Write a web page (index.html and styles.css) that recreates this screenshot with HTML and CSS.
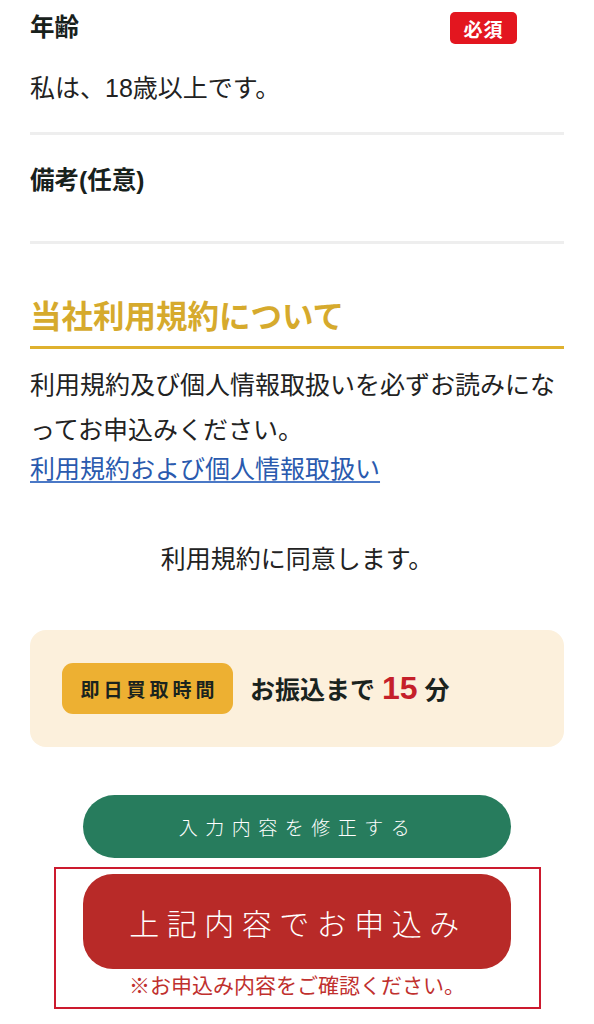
FILE: index.html
```html
<!DOCTYPE html>
<html lang="ja">
<head>
<meta charset="utf-8">
<title>お申込み内容確認</title>
<link rel="stylesheet" href="styles.css">
</head>
<body>
<main class="page">
  <section class="field">
    <div class="field-head">
      <span class="field-label">年齢</span>
      <span class="req-badge">必須</span>
    </div>
    <p class="field-value">私は、18歳以上です。</p>
  </section>
  <section class="field field-empty">
    <div class="field-head field-head-2">
      <span class="field-label">備考(任意)</span>
    </div>
  </section>

  <h2 class="terms-title">当社利用規約について</h2>
  <p class="terms-text">利用規約及び個人情報取扱いを必ずお読みになってお申込みください。</p>
  <p class="terms-link-wrap"><a class="terms-link" href="#">利用規約および個人情報取扱い</a></p>
  <p class="agree">利用規約に同意します。</p>

  <div class="sameday">
    <span class="sameday-badge">即日買取時間</span>
    <span class="sameday-text">お振込まで <em class="sameday-num">15</em> 分</span>
  </div>

  <div class="actions">
    <button class="btn btn-edit" type="button">入力内容を修正する</button>
    <div class="submit-frame">
      <button class="btn btn-submit" type="button">上記内容でお申込み</button>
      <p class="submit-note">※お申込み内容をご確認ください。</p>
    </div>
  </div>
</main>
</body>
</html>
```

FILE: styles.css
```css
* {
  box-sizing: border-box;
}

html, body {
  margin: 0;
  padding: 0;
  background: #ffffff;
}

body {
  font-family: "Liberation Sans", "Noto Sans CJK JP", sans-serif;
  color: #1f2622;
}

.page {
  width: 594px;
  padding: 0 30px;
}

p {
  margin: 0;
}

.field {
  border-bottom: 3px solid #eeeeee;
}

.field-head {
  display: flex;
  align-items: center;
  justify-content: space-between;
  padding: 12px 47px 0 0;
  height: 44px;
}

.field-label {
  font-size: 24.5px;
  font-weight: 700;
  line-height: 32px;
  color: #18211c;
}

.req-badge {
  display: inline-flex;
  align-items: center;
  justify-content: center;
  width: 67px;
  height: 32px;
  background: #e3161f;
  color: #ffffff;
  border-radius: 5px;
  font-size: 19px;
  font-weight: 700;
  letter-spacing: 1px;
}

.field-value {
  font-size: 25px;
  line-height: 38px;
  margin-top: 25px;
  padding-bottom: 25px;
  color: #222222;
}

.field-head-2 {
  padding-top: 30px;
  height: 62px;
}

.field-empty {
  padding-bottom: 44px;
}

.terms-title {
  margin: 51px 0 0;
  font-size: 31.5px;
  font-weight: 700;
  line-height: 44px;
  color: #d6aa2d;
  padding-bottom: 7px;
  border-bottom: 3px solid #dfb12f;
}

.terms-text {
  margin-top: 14px;
  font-size: 25px;
  line-height: 45px;
  color: #222222;
}

.terms-link-wrap {
  font-size: 25px;
  line-height: 33px;
}

.terms-link {
  color: #2a5aae;
  text-decoration: underline;
  text-decoration-color: #4a78c6;
  text-underline-offset: 3px;
}

.agree {
  margin-top: 54px;
  text-align: center;
  font-size: 25px;
  line-height: 38px;
  color: #222222;
}

.sameday {
  margin-top: 52px;
  display: flex;
  align-items: center;
  gap: 17px;
  padding: 33px 32px;
  background: #fcf0dc;
  border-radius: 16px;
}

.sameday-badge {
  display: inline-flex;
  align-items: center;
  justify-content: center;
  width: 171px;
  height: 51px;
  padding-left: 4px;
  background: #edb032;
  border-radius: 11px;
  font-size: 19px;
  font-weight: 700;
  letter-spacing: 4px;
  color: #1a231e;
}

.sameday-text {
  font-size: 25px;
  font-weight: 700;
  color: #1a231e;
}

.sameday-num {
  font-style: normal;
  font-size: 32px;
  color: #c51f2a;
}

.actions {
  display: flex;
  flex-direction: column;
  align-items: center;
  margin-top: 48px;
}

.btn {
  display: block;
  width: 428px;
  border: none;
  color: #ffffff;
  font-family: "Liberation Sans", "Noto Sans CJK JP", sans-serif;
  font-weight: 300;
  cursor: pointer;
}

.btn-edit {
  height: 63px;
  border-radius: 32px;
  background: #277c5d;
  font-size: 19px;
  letter-spacing: 7.5px;
  padding-left: 8px;
}

.submit-frame {
  margin-top: 9px;
  width: 487px;
  border: 2px solid #cc1a2e;
  padding: 5px 0 6px;
  display: flex;
  flex-direction: column;
  align-items: center;
}

.btn-submit {
  height: 95px;
  border-radius: 30px;
  background: #b82a28;
  font-size: 30px;
  letter-spacing: 7.5px;
  padding-left: 8px;
}

.submit-note {
  margin-top: 2px;
  font-size: 21px;
  line-height: 30px;
  color: #c0302e;
}
```
